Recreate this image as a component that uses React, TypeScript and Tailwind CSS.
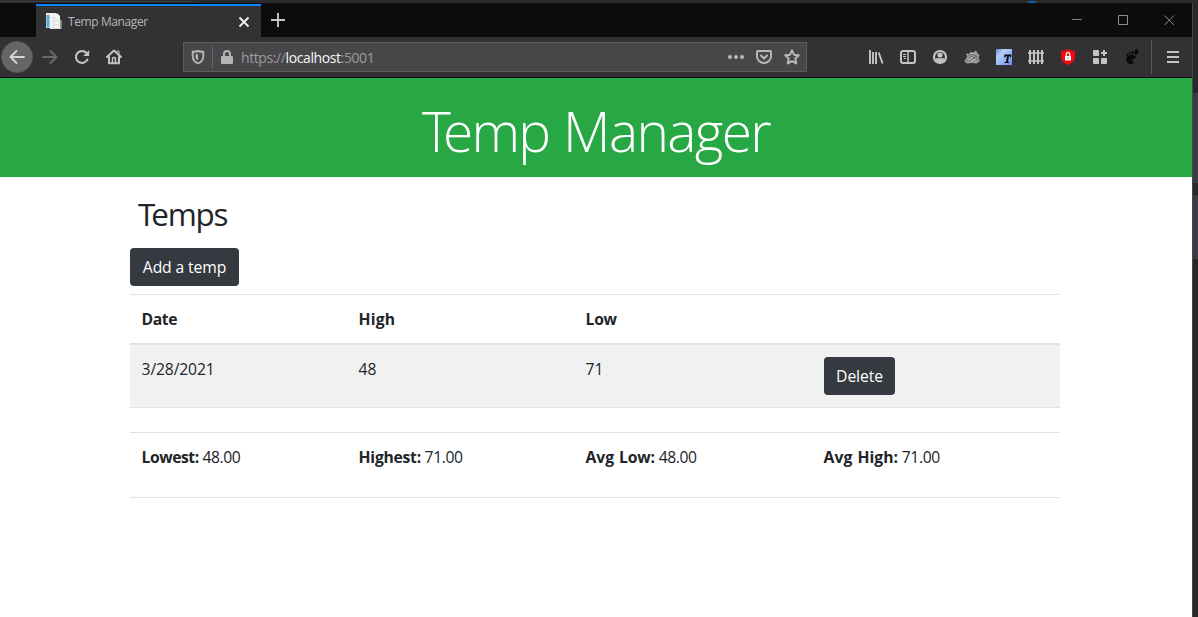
import React from "react";

type IconProps = { children: React.ReactNode; className?: string };

function Icon({ children, className = "text-[#c4c3c5]" }: IconProps) {
  return (
    <svg
      viewBox="0 0 16 16"
      className={`h-4 w-4 shrink-0 ${className}`}
      fill="none"
      stroke="currentColor"
      strokeWidth="2"
      strokeLinecap="round"
      strokeLinejoin="round"
    >
      {children}
    </svg>
  );
}

function TabStrip() {
  return (
    <div className="flex h-[34px] bg-[#0c0c0d]">
      <div className="mt-px ml-9 flex h-[33px] w-[225px] items-center border-t-2 border-[#0a84ff] bg-[#323234] pr-[11px] pl-[9px]">
        <svg viewBox="0 0 17 17" className="h-[17px] w-[17px] shrink-0">
          <path d="M1 0h10v15H1z" fill="#e4eef4" />
          <path d="M1.500 2h3v12.500h-3z" fill="#5ba9d0" />
          <path d="M5 .5h7.500l2.500 2.500v13H5z" fill="#f3f3f2" />
          <path d="M6.500 4h4v2h-4zM9 11h5v1H9z" fill="#dde1e3" />
          <path d="M8.500 7.500h7.500v8H8.500z" fill="none" stroke="#d9dcdd" />
        </svg>
        <span className="mt-px ml-[6px] flex-1 text-[12px] tracking-[-0.4px] text-[#b6b6b8]">Temp Manager</span>
        <svg viewBox="0 0 12 12" className="h-3 w-3 shrink-0" stroke="#f0f0f1" strokeWidth="1.900">
          <path d="M1.500 1.500l9 9M10.500 1.500l-9 9" />
        </svg>
      </div>
      <svg viewBox="0 0 14 14" className="mt-[10px] ml-[10px] h-[14px] w-[14px]" stroke="#c4c4c5" strokeWidth="1.900">
        <path d="M7 0v14M0 7h14" />
      </svg>
      <div className="mt-[11px] mr-[17px] ml-auto flex h-3 items-center gap-[35px]">
        <svg viewBox="0 0 11 11" className="h-[11px] w-[11px]" stroke="#858585" fill="none">
          <path d="M0 4.500h10" />
        </svg>
        <svg viewBox="0 0 11 11" className="h-[11px] w-[11px]" stroke="#8c8c8c" fill="none">
          <path d="M.5.5h9v9h-9z" />
        </svg>
        <svg viewBox="0 0 11 11" className="h-[11px] w-[11px]" stroke="#8c8c8c" fill="none">
          <path d="M.5.5l9.500 9.500M10 .5L.5 10" />
        </svg>
      </div>
    </div>
  );
}

function UrlBar() {
  return (
    <div className="ml-[61px] flex h-[30px] w-[624px] items-center border border-[#5c5c5f] bg-[#474749] pr-[6px] pl-[6px]">
      <Icon className="text-[#b4b4b5]">
        <path d="M8 2C6.500 2.600 4.500 2.800 2.700 2.800V7c0 3.500 2 6.200 5.300 7.300 3.300-1.100 5.300-3.800 5.300-7.300V2.800C11.500 2.800 9.500 2.600 8 2z" strokeWidth="1.900" />
        <path d="M8 4.800C7.300 5.200 6.500 5.400 5.500 5.500V7.500c0 1.800.9 3.200 2.500 4z" fill="currentColor" stroke="none" />
      </Icon>
      <div className="ml-[6px] h-[22px] w-px bg-[#5d6673]" />
      <Icon className="ml-[6px] text-[#b4b4b5]">
        <path d="M2 8a1 1 0 0 1 1-1h10a1 1 0 0 1 1 1v6a1 1 0 0 1-1 1H3a1 1 0 0 1-1-1z" fill="currentColor" stroke="none" />
        <path d="M5 7V5a3 3 0 0 1 6 0v2" />
      </Icon>
      <span className="mt-px ml-[6px] flex-1 text-[14px] tracking-[-0.4px] text-[#9b9b9d]">
        https://<span className="text-[#f9f9fa]">localhost</span>:5001
      </span>
      <div className="flex gap-3">
        <Icon className="text-[#b8b8b9]">
          <g fill="currentColor" stroke="none">
            <circle cx="2" cy="8" r="2" />
            <circle cx="8" cy="8" r="2" />
            <circle cx="14" cy="8" r="2" />
          </g>
        </Icon>
        <Icon className="text-[#b8b8b9]">
          <path d="M2 2h12a1 1 0 0 1 1 1v4.500a7 6.500 0 0 1-14 0V3a1 1 0 0 1 1-1z" strokeWidth="2" />
          <path d="M5 6.500l3 3 3-3" />
        </Icon>
        <Icon className="text-[#b8b8b9]">
          <path d="M8 1.300l2 4.400 4.800.5-3.500 3.300.9 4.900L8 12l-4.200 2.400.9-4.900L1.200 6.200 6 5.700z" strokeWidth="2" />
        </Icon>
      </div>
    </div>
  );
}

function Extensions() {
  return (
    <div className="ml-[61px] flex items-center gap-4">
      <Icon>
        <path d="M2 1v14M5 3v12M8 3v12M10.700 3.500l3.900 11" strokeWidth="1.900" strokeLinecap="butt" />
      </Icon>
      <Icon>
        <rect x="1" y="2" width="14" height="12" rx="2" />
        <path d="M8 2v12" strokeWidth="1.500" />
        <path d="M3 5.500h3M3 7.500h3M4 9.500h2" strokeWidth="1" strokeLinecap="butt" />
      </Icon>
      <Icon>
        <circle cx="8" cy="8" r="6" strokeWidth="2.200" />
        <circle cx="8" cy="6" r="2.600" fill="currentColor" stroke="none" />
        <path d="M3.500 9.200h9l-1 2.800c-2 1.500-5 1.500-7 0z" fill="currentColor" stroke="none" />
      </Icon>
      <Icon className="text-[#a9a9aa]">
        <path d="M1 12l3-5-2-2 3 .5L7 3l2 1.500L12 2l1 3 2 1-1 3 1.500 3-3 2-5-.5-4 .5z" fill="#929293" stroke="#b5b5b5" strokeWidth=".8" />
        <path d="M3 12l5-5 3 2M6 12l4-3 4 2M5 6l4-1 4 3" stroke="#4a4a4c" strokeWidth=".7" />
        <path d="M4 11l5-3M7 12l5-2M7 5l4-1" stroke="#d8d8d8" strokeWidth=".7" />
      </Icon>
      <svg viewBox="0 0 16 16" className="h-4 w-4 shrink-0">
        <defs>
          <linearGradient id="tile" x1="0" y1="0" x2="1" y2="1">
            <stop offset="0" stopColor="#5d86d8" />
            <stop offset=".3" stopColor="#b5cdf8" />
            <stop offset="1" stopColor="#6990e2" />
          </linearGradient>
        </defs>
        <path d="M0 0h16v16H0z" fill="url(#tile)" />
        <path d="M8.500 5.500h7l-.5 3h-1l-.2-1.500h-.8L12 13h1.200l-.2 1H8.500l.2-1H10l1-6h-.8L9 8.500H8z" fill="#0b0d12" />
      </svg>
      <Icon>
        <path d="M2 1v14M6 1v14M10 1v14M14 1v14" strokeWidth="2" strokeLinecap="butt" />
        <path d="M0 4h16M0 12h16" strokeWidth="1.500" strokeLinecap="butt" />
      </Icon>
      <svg viewBox="0 0 16 16" className="h-4 w-4 shrink-0">
        <path d="M8 0c2 1.300 4.500 2 7 2v5c0 4.500-3 7.500-7 9-4-1.500-7-4.500-7-9V2c2.500 0 5-.7 7-2z" fill="#ee0c0c" />
        <path d="M5 7h6v4.500H5z" fill="#fff" />
        <path d="M6.200 7V5.500a1.800 1.800 0 0 1 3.600 0V7" fill="none" stroke="#fff" strokeWidth="1.200" />
        <path d="M7.600 8.300h.8v1.700h-.8z" fill="#d55" />
      </svg>
      <Icon>
        <g fill="currentColor" stroke="none">
          <rect x="1" y="1" width="6" height="6" rx=".7" />
          <rect x="1" y="9" width="6" height="6" rx=".7" />
          <rect x="9" y="9" width="6" height="6" rx=".7" />
          <path d="M11 1h2v2h2v2h-2v2h-2V5H9V3h2z" />
        </g>
      </Icon>
      <svg viewBox="0 0 16 16" className="h-4 w-4 shrink-0" fill="#09090a">
        <path d="M2.500 8.500C4 5.500 9 5.500 11.300 7c1.500 1.500-.6 3-2.300 3-1.500.3-1.500 1.500-.3 1.800 1.300.2 1.500 3.200-1.400 3.500C4 15.500 1.500 12 2.500 8.500z" />
        <ellipse cx="12.300" cy="2.900" rx="1.800" ry="2.800" transform="rotate(18 12.300 2.900)" />
        <ellipse cx="8.500" cy="3.500" rx="1.100" ry="1.900" />
        <ellipse cx="5.600" cy="4.400" rx="1" ry="1.500" transform="rotate(-15 5.600 4.400)" />
        <ellipse cx="3.200" cy="5.800" rx=".8" ry="1.200" transform="rotate(-25 3.200 5.800)" />
      </svg>
    </div>
  );
}

function Toolbar() {
  return (
    <div className="flex h-[41px] items-center border-b border-[#0c0c0d] bg-[#323234]">
      <div className="ml-px flex h-8 w-8 shrink-0 items-center justify-center rounded-full border border-[#58585a] bg-[#666667]">
        <Icon className="text-[#d5d5d6]">
          <path d="M15 8H1.500M7.500 2L1.500 8l6 6" strokeWidth="1.900" />
        </Icon>
      </div>
      <div className="ml-[9px] flex gap-4">
        <Icon className="text-[#6b6b6d]">
          <path d="M1 8h13.500M8.500 2l6 6-6 6" strokeWidth="1.900" />
        </Icon>
        <Icon>
          <path d="M13.400 10.500A6 6 0 1 1 12.500 4" />
          <path d="M15.200 1v6H9.200z" fill="currentColor" stroke="none" />
        </Icon>
        <Icon>
          <path d="M1 8l7-6.500L15 8M3 8v6.300h10V8" />
          <path d="M6.500 14V9.500a1 1 0 0 1 1-1h1a1 1 0 0 1 1 1V14" strokeWidth="1.500" />
          <path d="M11 2h2v3" strokeWidth="1" />
        </Icon>
      </div>
      <UrlBar />
      <Extensions />
      <div className="ml-[11px] h-[34px] w-px bg-[#5b5b5d]" />
      <Icon className="ml-[13px] text-[#c4c3c5]">
        <path d="M2 3h12M2 8h12M2 13h12" strokeLinecap="butt" />
      </Icon>
    </div>
  );
}

function Button({ children, className }: { children: React.ReactNode; className: string }) {
  return (
    <button className={`block h-[38px] rounded-[4px] bg-[#343a40] text-center whitespace-nowrap text-white ${className}`}>
      {children}
    </button>
  );
}

const columns = "grid grid-cols-[217px_227px_238px_248px] border-[#dee2e6] [&>*]:px-[11.600px]";

const stats = [
  { label: "Lowest:", value: "48.00", tracking: "tracking-[-0.460px]" },
  { label: "Highest:", value: "71.00", tracking: "tracking-[-0.250px]" },
  { label: "Avg Low:", value: "48.00", tracking: "tracking-[-0.100px]" },
  { label: "Avg High:", value: "71.00", tracking: "tracking-[0.040px]" },
];

function Page() {
  return (
    <main className="flex-1 bg-white text-[15.700px] leading-6 text-[#212529]">
      <h1 className="h-[99px] bg-[#28a745] pt-[19px] text-center text-[55px] leading-[67px] font-light tracking-[-1.650px] text-white [word-spacing:1px] first-letter:tracking-[-8px]">
        Temp Manager
      </h1>
      <div className="ml-[130px] w-[930px] pt-[18px]">
        <h2 className="pl-2 text-[31.400px] leading-[38px] font-normal tracking-[-1.200px] first-letter:tracking-[-4px]">
          Temps
        </h2>
        <Button className="mt-[15px] w-[109px] tracking-[-0.120px]">Add a temp</Button>
        <div className={`${columns} mt-2 h-[51px] border-t border-b-2 pt-3 font-bold tracking-[-0.300px]`}>
          <span className="tracking-[-0.450px]">Date</span>
          <span className="tracking-[0.150px]">High</span>
          <span>Low</span>
          <span />
        </div>
        <div className={`${columns} h-[63px] border-b bg-[#f1f1f1] pt-3 tracking-[-0.150px]`}>
          <span>3/28/2021</span>
          <span>48</span>
          <span>71</span>
          <div className="!px-3">
            <Button className="w-[71px] tracking-[-0.100px]">Delete</Button>
          </div>
        </div>
        <div className={`${columns} mt-6 h-[66px] border-y pt-3 tracking-[-0.400px]`}>
          {stats.map(({ label, value, tracking }) => (
            <span key={label}>
              <b className={`[word-spacing:1px] ${tracking}`}>{label}</b> {value}
            </span>
          ))}
        </div>
      </div>
    </main>
  );
}

export default function App() {
  return (
    <div className="flex h-[617px] w-[1198px] flex-col overflow-hidden bg-[#28282a] font-['Open_Sans','Noto_Sans',sans-serif]">
      <div className="flex h-[3px] shrink-0 items-start bg-[#2b2b2d]">
        <div className="h-[2px] w-[193px] border-b border-[#414144]" />
        <div className="mt-px ml-[835px] h-[2px] w-2 rounded-t bg-[#0763b5]" />
      </div>
      <div className="flex flex-1">
        <div className="flex w-[1192px] flex-col">
          <TabStrip />
          <Toolbar />
          <Page />
        </div>
        <div className="w-px bg-[#48484a]" />
        <div className="flex flex-1 flex-col pt-[90px]">
          <div className="h-[90px] bg-[#3c3c44]" />
          <div className="mt-3 h-16 bg-[#3c3c44]" />
        </div>
      </div>
    </div>
  );
}
